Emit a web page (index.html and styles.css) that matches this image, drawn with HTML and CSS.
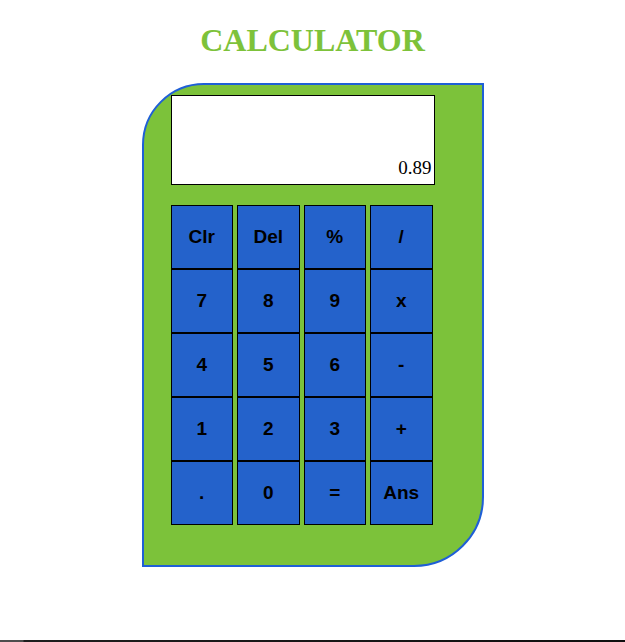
FILE: index.html
```html
<!DOCTYPE html>
<html>
<head>
<meta charset="utf-8">
<title>Calculator</title>
<link rel="stylesheet" href="styles.css">
</head>
<body>
<main class="page">
  <h1 class="title">CALCULATOR</h1>
  <div class="calc">
    <div class="display"><span class="value">0.89</span></div>
    <div class="keys">
      <button class="key">Clr</button>
      <button class="key">Del</button>
      <button class="key">%</button>
      <button class="key">/</button>
      <button class="key">7</button>
      <button class="key">8</button>
      <button class="key">9</button>
      <button class="key">x</button>
      <button class="key">4</button>
      <button class="key">5</button>
      <button class="key">6</button>
      <button class="key">-</button>
      <button class="key">1</button>
      <button class="key">2</button>
      <button class="key">3</button>
      <button class="key">+</button>
      <button class="key">.</button>
      <button class="key">0</button>
      <button class="key">=</button>
      <button class="key">Ans</button>
    </div>
  </div>
</main>
<div class="bottom-bar"></div>
</body>
</html>
```

FILE: styles.css
```css
html, body {
  margin: 0;
  padding: 0;
  background: #ffffff;
}

body {
  min-height: 100vh;
  display: flex;
  flex-direction: column;
  font-family: "Liberation Serif", "Times New Roman", serif;
}

.page {
  flex: 1;
  display: flex;
  flex-direction: column;
  align-items: center;
  padding-top: 22px;
}

.title {
  margin: 0 0 25px;
  font-family: "Liberation Serif", "Times New Roman", serif;
  font-size: 32px;
  line-height: 36px;
  font-weight: bold;
  color: #7dc23a;
  text-align: center;
}

.calc {
  box-sizing: border-box;
  width: 342px;
  height: 484px;
  background: #7cc23a;
  border: 2px solid #1f5fd6;
  border-radius: 62px 0 70px 0;
  padding: 10px 0 0 27px;
}

.display {
  box-sizing: border-box;
  width: 264px;
  height: 90px;
  background: #ffffff;
  border: 1px solid #000000;
  display: flex;
  justify-content: flex-end;
  align-items: flex-end;
  padding: 0 2px 5px 0;
}

.value {
  font-family: "Liberation Serif", "Times New Roman", serif;
  font-size: 19px;
  line-height: 22px;
  color: #000000;
}

.keys {
  margin-top: 20px;
  width: 262px;
  display: grid;
  grid-template-columns: repeat(4, 62.5px);
  grid-auto-rows: 64px;
  column-gap: 4px;
}

.key {
  box-sizing: border-box;
  margin: 0;
  padding: 0;
  background: #2462cb;
  border: 1px solid #000000;
  border-radius: 0;
  color: #000000;
  font-family: "Liberation Sans", Arial, sans-serif;
  font-weight: bold;
  font-size: 19px;
  display: flex;
  align-items: center;
  justify-content: center;
}

.bottom-bar {
  height: 2px;
  background: linear-gradient(to right, #4d4d4d 0, #4d4d4d 23px, #1e1e1e 24px, #0f0f0f 100%);
}
```
